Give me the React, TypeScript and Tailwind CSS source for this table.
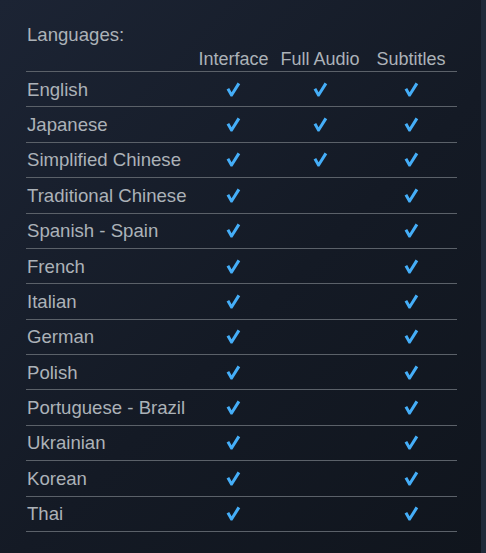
import React from "react";

const rows: [string, boolean, boolean, boolean][] = [
  ["English", true, true, true],
  ["Japanese", true, true, true],
  ["Simplified Chinese", true, true, true],
  ["Traditional Chinese", true, false, true],
  ["Spanish - Spain", true, false, true],
  ["French", true, false, true],
  ["Italian", true, false, true],
  ["German", true, false, true],
  ["Polish", true, false, true],
  ["Portuguese - Brazil", true, false, true],
  ["Ukrainian", true, false, true],
  ["Korean", true, false, true],
  ["Thai", true, false, true],
];

function Check() {
  return (
    <svg width="15" height="15" viewBox="0 0 15 15" className="block">
      <path
        d="M0.6 7.4 L3.2 6 L5.6 10.2 L11.6 0.6 L14.2 2.2 L6.4 14.6 L4.6 14.6 Z"
        fill="#45aef8"
      />
    </svg>
  );
}

function Cell({ on }: { on: boolean }) {
  return (
    <div className="flex items-center justify-center">{on ? <Check /> : null}</div>
  );
}

export default function App() {
  return (
    <div
      className="w-[486px] h-[553px] flex bg-[linear-gradient(135deg,#1c2434_0%,#141a25_55%,#10151d_100%)] text-[#acb2b8]"
      style={{ fontFamily: '"Liberation Sans", Arial, sans-serif' }}
    >
      <div className="flex-1 pl-[26px] pt-[24px]">
        <div className="text-[18.6px] leading-[21px] pl-[1px]">Languages:</div>
        <div className="w-[431px] text-[18px] leading-[21px]">
          <div className="grid grid-cols-[166px_83px_90px_92px] pt-[4px] pb-[1px] border-b border-[#5b6169]">
            <div />
            <div className="text-center">Interface</div>
            <div className="text-center">Full Audio</div>
            <div className="text-center">Subtitles</div>
          </div>
          {rows.map(([name, a, b, c]) => (
            <div
              key={name}
              className="grid grid-cols-[166px_83px_90px_92px] h-[35.38px] items-center border-b border-[#5b6169]"
            >
              <div className="pl-[1px] whitespace-nowrap text-[18.6px]">{name}</div>
              <Cell on={a} />
              <Cell on={b} />
              <Cell on={c} />
            </div>
          ))}
        </div>
      </div>
      <div className="w-[5px] h-full bg-[#202a39]" />
    </div>
  );
}
